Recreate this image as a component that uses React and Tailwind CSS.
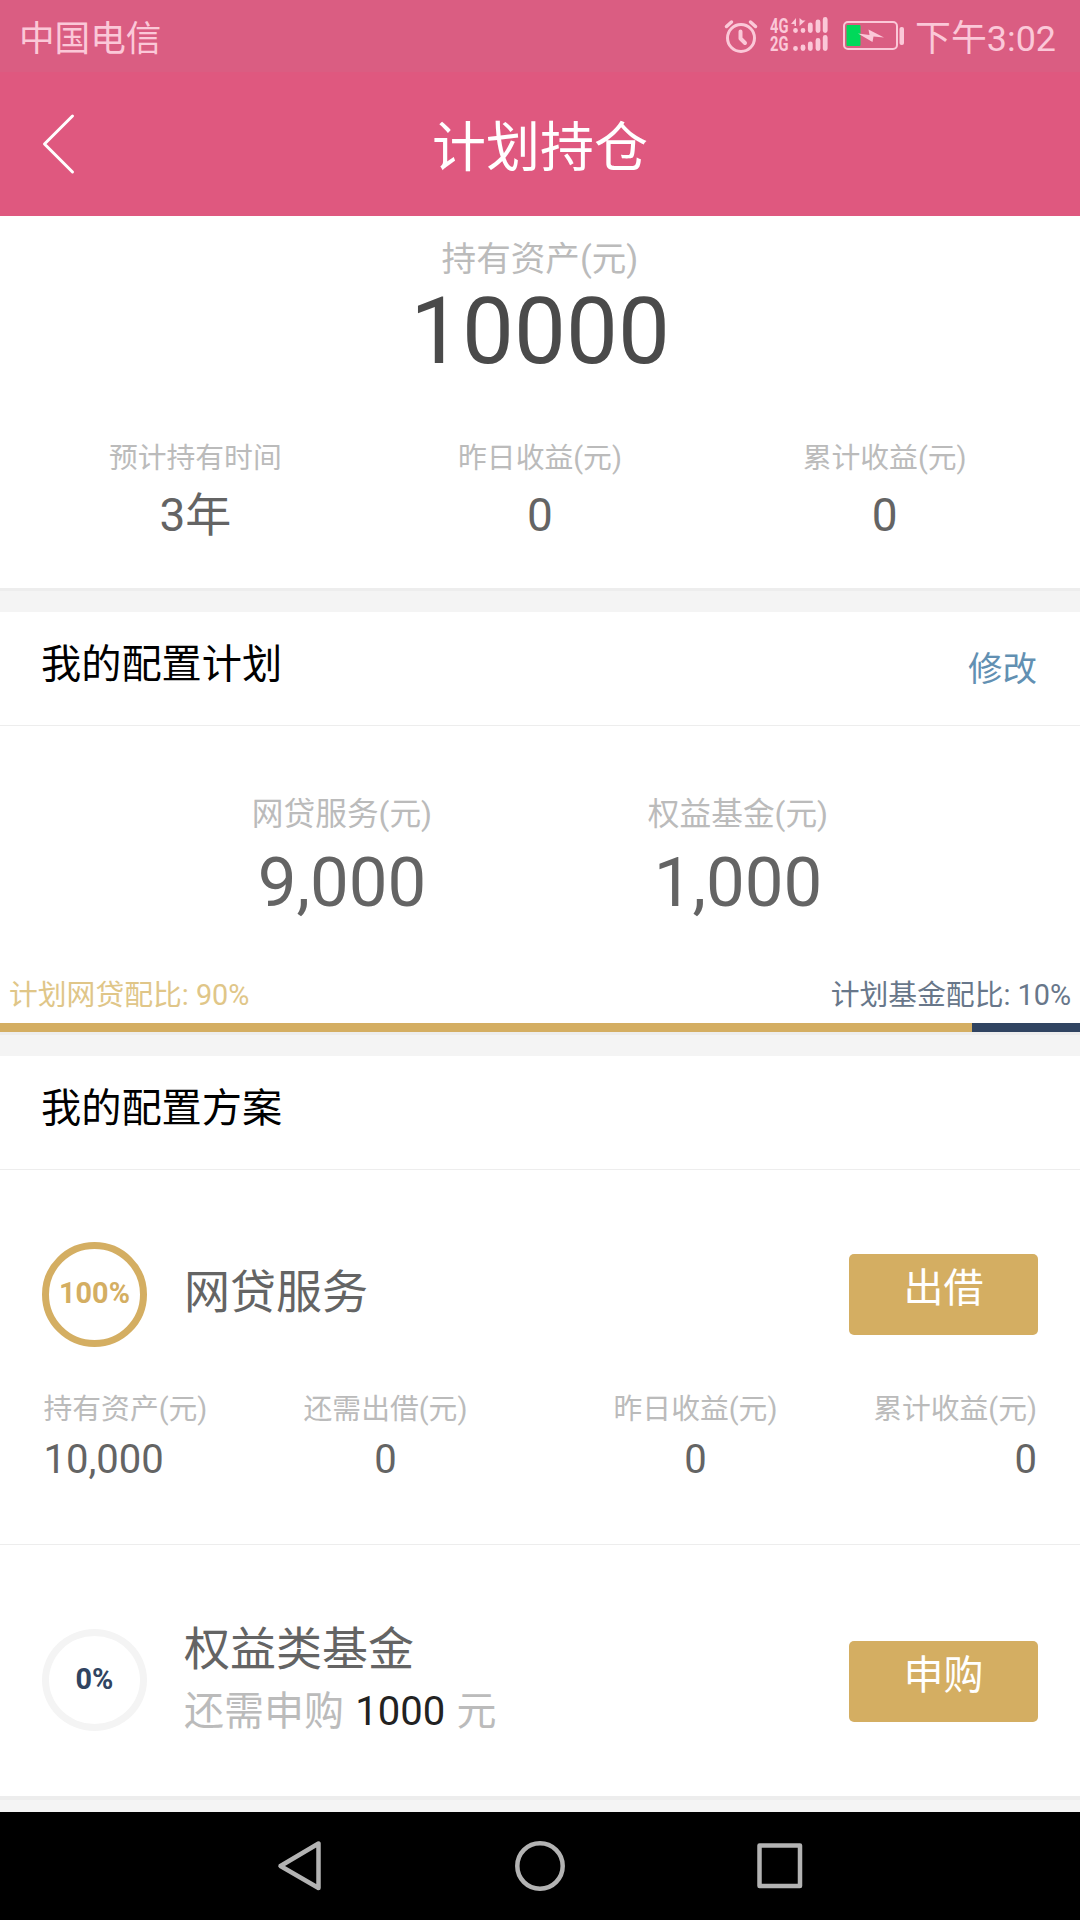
import React from 'react';

const SUMMARY = [
  { label: '预计持有时间', value: '3年' },
  { label: '昨日收益(元)', value: '0' },
  { label: '累计收益(元)', value: '0' },
];

const PLAN = [
  { label: '网贷服务(元)', value: '9,000' },
  { label: '权益基金(元)', value: '1,000' },
];

const LOAN_STATS = [
  { label: '持有资产(元)', value: '10,000', cell: 'w-[163px] items-start' },
  { label: '还需出借(元)', value: '0', cell: 'w-[358px] items-center' },
  { label: '昨日收益(元)', value: '0', cell: 'w-[262px] items-center' },
  { label: '累计收益(元)', value: '0', cell: 'flex-1 items-end' },
];

function StatusBar() {
  return (
    <div className="flex h-[72px] items-center bg-[#da5d82] pl-[19px] pr-[24px] text-[36px] leading-[68px] text-[#fbc8d8]">
      <span className="pt-[5px] text-[35.6px]">中国电信</span>
      <svg className="ml-auto" width="34" height="34" viewBox="0 0 34 34" fill="none" stroke="#fbc8d8" strokeLinecap="round">
        <circle cx="17" cy="19" r="13.5" strokeWidth="3" />
        <path d="M16.5 12.500v7l4.500 4.500" strokeWidth="4" strokeLinejoin="round" />
        <path d="M2.500 7.500l5-4.500M31.500 7.500l-5-4.500" strokeWidth="3.500" />
      </svg>
      <div className="ml-[12px] flex h-[38px] w-[59px]">
        <div className="w-[20px] text-[21px] font-bold leading-[18px]">
          <div className="h-[18px] w-[28px] origin-left scale-x-[0.7]">4G</div>
          <div className="h-[18px] w-[28px] origin-left scale-x-[0.7]">2G</div>
        </div>
        <svg width="39" height="38" viewBox="0 0 39 38" fill="none" stroke="#fbc8d8" strokeWidth="4.800" strokeLinecap="round">
          <path d="M5.500 13.500v.1M13 13.500v.1M20.300 8v5.500M28 5v8.500M35.200 2.500v11" />
          <path d="M5.500 31.500v.1M13 30v1.500M20.300 27v4.500M28 23.500v8M35.200 20.500v11" />
          <path d="M1 7l5-6v8h-1.500v-2zM9.500 1v8l6-5.500h-3z" fill="#fbc8d8" stroke="none" />
        </svg>
      </div>
      <svg className="ml-[13px]" width="64" height="32" viewBox="0 0 64 32">
        <rect x="2" y="2" width="53" height="27" rx="4" fill="none" stroke="#fbc8d8" strokeWidth="2" />
        <rect x="4.500" y="5" width="14" height="21" rx="1" fill="#00d95a" />
        <path d="M16 13.500l11.500 1.500-1-5.500 15.500 8-10.500-1-1 5.500z" fill="#fbc8d8" />
        <rect x="57.500" y="7" width="4.500" height="18" rx="2" fill="#fbc8d8" />
      </svg>
      <span className="ml-[9px] pt-[5px] text-[35.9px]">下午3:02</span>
    </div>
  );
}

function Header() {
  return (
    <div className="grid h-[144px] grid-cols-[120px_1fr_120px] items-center bg-[#df587f] text-white">
      <svg className="ml-[41px]" width="36" height="62" viewBox="0 0 36 62" fill="none" stroke="currentColor" strokeWidth="3" strokeLinecap="round" strokeLinejoin="round">
        <path d="M31.500 3L3.500 31l28 28" />
      </svg>
      <h1 className="pt-[10px] text-center text-[54px] leading-[80px]">计划持仓</h1>
    </div>
  );
}

function Gap() {
  return <div className="h-[24px] border-t-[3px] border-[#ededed] bg-[#f4f4f4]" />;
}

function SectionTitle({ title, action }) {
  return (
    <div className="flex h-[114px] justify-between border-b border-[#ededed] pl-[41px] pr-[43px]">
      <h2 className="pt-[23px] text-[40.2px] leading-[60px] text-black">{title}</h2>
      {action && <button className="mt-[27px] h-[60px] self-start text-[34.5px] leading-[60px] text-[#6290b2]">{action}</button>}
    </div>
  );
}

function Ring({ text, className }) {
  return (
    <div className={`flex w-[105px] items-center justify-center rounded-[50%] border-[7px] text-[28.8px] font-bold leading-none ${className}`}>
      <span className="-mt-[2px]">{text}</span>
    </div>
  );
}

function GoldButton({ children }) {
  return (
    <button className="h-[81px] w-[189px] rounded-[5px] bg-[#d4ae62] pb-[12px] text-[40px] leading-[69px] text-white">
      {children}
    </button>
  );
}

function NavBar() {
  return (
    <div className="flex h-[108px] items-center bg-black pl-[276px]">
      <svg width="530" height="54" viewBox="0 0 530 54" fill="none" stroke="#b3b3b3" strokeWidth="4.500" strokeLinejoin="round">
        <path d="M42.500 4.500v44.500L4.500 27z" />
        <circle cx="264" cy="27" r="22.700" />
        <rect x="483.500" y="6.500" width="40.500" height="40.500" />
      </svg>
    </div>
  );
}

export default function App() {
  return (
    <div className="flex h-[1920px] w-[1080px] flex-col overflow-hidden bg-white font-['Roboto','Noto_Sans_CJK_SC',sans-serif] text-[#646464]">
      <StatusBar />
      <Header />

      <section className="flex h-[372px] flex-col items-center">
        <div className="mt-[18px] text-[34.6px] leading-[50px] text-[#bbb]">持有资产(元)</div>
        <div className="text-[92.4px] leading-[96px] text-[#4a4a4a]">10000</div>
        <div className="mt-[58px] grid w-full grid-cols-3 px-[23px] text-center">
          {SUMMARY.map(item => (
            <div key={item.label}>
              <div className="text-[28.8px] leading-[40px] text-[#bbb]">{item.label}</div>
              <div className="mt-[7px] text-[46px] leading-[60px]">{item.value}</div>
            </div>
          ))}
        </div>
      </section>

      <Gap />
      <SectionTitle title="我的配置计划" action="修改" />
      <section className="flex h-[306px] flex-col">
        <div className="grid grid-cols-[396px_396px] justify-center pt-[67px] text-center">
          {PLAN.map(item => (
            <div key={item.label}>
              <div className="text-[31.7px] leading-[44px] text-[#bbb]">{item.label}</div>
              <div className="mt-[6px] text-[69px] leading-[80px]">{item.value}</div>
            </div>
          ))}
        </div>
        <div className="mt-[52px] flex justify-between px-[9px] text-[28.8px] leading-[40px]">
          <span className="text-[#e0c688]">计划网贷配比: 90%</span>
          <span className="text-[#68778a]">计划基金配比: 10%</span>
        </div>
        <div className="mt-auto flex h-[9px]">
          <div className="w-[90%] bg-[#d4ae62]" />
          <div className="flex-1 bg-[#304461]" />
        </div>
      </section>

      <Gap />
      <SectionTitle title="我的配置方案" />
      <section className="h-[375px] border-b border-[#ededed] px-[42px] pt-[72px]">
        <div className="flex h-[105px] items-center">
          <Ring text="100%" className="h-[105px] border-[#d4ae62] text-[#d4ae62]" />
          <div className="-mt-[5px] ml-[37px] flex-1 text-[46px] leading-[60px]">网贷服务</div>
          <GoldButton>出借</GoldButton>
        </div>
        <div className="mt-[42px] flex pl-[1.5px] pr-px">
          {LOAN_STATS.map(item => (
            <div key={item.label} className={`flex shrink-0 flex-col whitespace-nowrap ${item.cell}`}>
              <div className="text-[28.8px] leading-[40px] text-[#bbb]">{item.label}</div>
              <div className="mt-px text-[40px] leading-[60px]">{item.value}</div>
            </div>
          ))}
        </div>
      </section>
      <section className="flex h-[251px] items-start px-[42px] pt-[84px]">
        <Ring text="0%" className="h-[102px] border-[#f4f4f4] text-[#304461]" />
        <div className="-mt-[10px] ml-[37px] flex-1">
          <div className="text-[46px] leading-[60px]">权益类基金</div>
          <div className="mt-[3px] text-[40px] leading-[60px] text-[#bbb] [word-spacing:1.3px]">
            还需申购 <span className="text-[#222]">1000</span> 元
          </div>
        </div>
        <div className="pt-[12px]"><GoldButton>申购</GoldButton></div>
      </section>
      <div className="h-[16px] border-t-[4px] border-[#ededed] bg-[#f4f4f4]" />
      <NavBar />
    </div>
  );
}
